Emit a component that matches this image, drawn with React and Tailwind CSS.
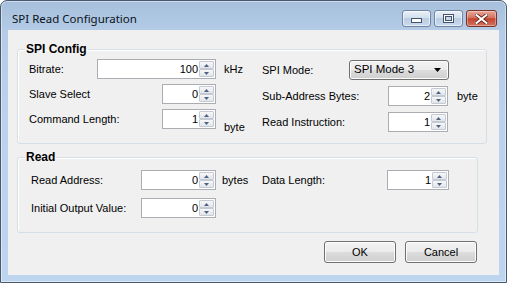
import React from 'react';

const btnFace =
  'bg-[linear-gradient(to_bottom,#f2f2f2_0%,#ebebeb_50%,#dddddd_50%,#cfcfcf_100%)] border border-[#707070] rounded-[3px] shadow-[inset_0_0_0_1px_#fcfcfc]';

function Spinner() {
  return (
    <div className="flex flex-col w-[15px] mr-[1px] py-[1px]">
      <div className="h-[8px] flex items-center justify-center border border-[#c3cad5] rounded-[1px] bg-[linear-gradient(to_bottom,#f7f7f7,#e3e5e9)]">
        <svg width="5" height="3" viewBox="0 0 5 3">
          <path d="M0 3 L2.5 0 L5 3 Z" fill="#4d6185" />
        </svg>
      </div>
      <div className="h-[8px] flex items-center justify-center border border-[#c3cad5] rounded-[1px] bg-[linear-gradient(to_bottom,#f7f7f7,#e3e5e9)]">
        <svg width="5" height="3" viewBox="0 0 5 3">
          <path d="M0 0 L5 0 L2.5 3 Z" fill="#4d6185" />
        </svg>
      </div>
    </div>
  );
}

function NumBox({ value, width }) {
  return (
    <div className={`flex h-[20px] border border-[#abadb3] bg-white shrink-0 ${width}`}>
      <div className="flex-1 text-right pr-[1px] leading-[18px] text-black">{value}</div>
      <Spinner />
    </div>
  );
}

function Label({ children, width }) {
  return <div className={`shrink-0 ${width}`}>{children}</div>;
}

function Group({ title, className, children }) {
  return (
    <fieldset className={`border border-[#d5dfe5] rounded-[3px] shadow-[inset_1px_1px_0_#ffffff] p-0 m-0 ${className}`}>
      <legend className="ml-[7px] px-[1px] text-[12px] leading-[14px] font-bold text-black">{title}</legend>
      {children}
    </fieldset>
  );
}

function CaptionButtons() {
  return (
    <div className="flex gap-[3px] pt-[9px] pr-[9px]">
      <div className="w-[29px] h-[17px] rounded-[3px] border border-[#6f84a2] bg-[linear-gradient(to_bottom,#e9f0f8_0%,#d3e0ee_45%,#bccde3_50%,#c9d9ec_100%)] shadow-[inset_0_0_0_1px_rgba(255,255,255,0.6)] flex items-end justify-center pb-[3px]">
        <svg width="11" height="5" viewBox="0 0 11 5">
          <rect x="0.5" y="0.5" width="10" height="4" fill="#ffffff" stroke="#43536b" />
        </svg>
      </div>
      <div className="w-[29px] h-[17px] rounded-[3px] border border-[#6f84a2] bg-[linear-gradient(to_bottom,#e9f0f8_0%,#d3e0ee_45%,#bccde3_50%,#c9d9ec_100%)] shadow-[inset_0_0_0_1px_rgba(255,255,255,0.6)] flex items-center justify-center">
        <svg width="11" height="9" viewBox="0 0 11 9">
          <rect x="0.5" y="0.5" width="10" height="8" fill="#ffffff" stroke="#43536b" />
          <rect x="2.5" y="2.5" width="6" height="4" fill="#c9d6e6" stroke="#43536b" />
        </svg>
      </div>
      <div className="w-[31px] h-[17px] rounded-[3px] border border-[#7b3228] bg-[linear-gradient(to_bottom,#e8a899_0%,#d5735f_45%,#c4432d_52%,#d27563_100%)] shadow-[inset_0_0_0_1px_rgba(255,255,255,0.35)] flex items-center justify-center">
        <svg width="13" height="10" viewBox="0 0 13 10">
          <path d="M1.5 1 L11.5 9 M11.5 1 L1.5 9" stroke="#5a1e16" strokeWidth="3.6" strokeLinecap="square" />
          <path d="M1.5 1 L11.5 9 M11.5 1 L1.5 9" stroke="#ffffff" strokeWidth="2" strokeLinecap="square" />
        </svg>
      </div>
    </div>
  );
}

export default function App() {
  return (
    <div className="w-[507px] h-[283px] bg-white font-['Liberation_Sans',Arial,sans-serif] text-[11px] text-black">
      <div className="w-[507px] h-[283px] flex flex-col border border-[#4a5a6e] rounded-t-[7px] bg-[linear-gradient(to_bottom,#a6bfdb_0%,#b4cce6_11%,#bad2eb_40%,#bdd5ee_100%)] shadow-[inset_0_0_0_1px_rgba(255,255,255,0.45)]">
        {/* Title bar */}
        <div className="h-[29px] flex justify-between shrink-0">
          <div className="pl-[11px] pt-[10px] font-['Noto_Sans',sans-serif] text-[11.5px] leading-[16px] text-[#0b1320]">
            SPI Read Configuration
          </div>
          <CaptionButtons />
        </div>

        {/* Client area */}
        <div className="mx-[7px] w-[491px] h-[245px] bg-[#f0f0f0] pl-[9px] pt-[12px] flex flex-col">
          <Group title="SPI Config" className="w-[470px] h-[102px]">
            <div className="flex pl-[11px]">
              <div className="w-[233px] flex flex-col gap-[5px] pt-[3px]">
                <div className="flex items-center h-[20px]">
                  <Label width="w-[68px]">Bitrate:</Label>
                  <NumBox value="100" width="w-[119px]" />
                  <div className="ml-[8px]">kHz</div>
                </div>
                <div className="flex items-center h-[20px]">
                  <Label width="w-[133px]">Slave Select</Label>
                  <NumBox value="0" width="w-[54px]" />
                </div>
                <div className="flex items-center h-[20px]">
                  <Label width="w-[133px]">Command Length:</Label>
                  <NumBox value="1" width="w-[54px]" />
                  <div className="ml-[8px] self-end -mb-[6px]">byte</div>
                </div>
              </div>
              <div className="flex flex-col gap-[6px] pt-[4px]">
                <div className="flex items-center h-[20px]">
                  <Label width="w-[87px]">SPI Mode:</Label>
                  <div className={`w-[100px] h-[20px] flex items-center justify-between pl-[4px] pr-[7px] ${btnFace}`}>
                    <span className="text-[11.5px]">SPI Mode 3</span>
                    <svg width="7" height="4" viewBox="0 0 7 4">
                      <path d="M0 0 L7 0 L3.5 4 Z" fill="#000000" />
                    </svg>
                  </div>
                </div>
                <div className="flex items-center h-[20px]">
                  <Label width="w-[126px]">Sub-Address Bytes:</Label>
                  <NumBox value="2" width="w-[60px]" />
                  <div className="ml-[9px]">byte</div>
                </div>
                <div className="flex items-center h-[20px]">
                  <Label width="w-[126px]">Read Instruction:</Label>
                  <NumBox value="1" width="w-[60px]" />
                </div>
              </div>
            </div>
          </Group>

          <Group title="Read" className="w-[461px] h-[83px] mt-[6px]">
            <div className="flex pl-[13px] pt-[6px]">
              <div className="w-[231px] flex flex-col gap-[8px]">
                <div className="flex items-center h-[20px]">
                  <Label width="w-[110px]">Read Address:</Label>
                  <NumBox value="0" width="w-[75px]" />
                  <div className="ml-[6px]">bytes</div>
                </div>
                <div className="flex items-center h-[20px]">
                  <Label width="w-[110px]">Initial Output Value:</Label>
                  <NumBox value="0" width="w-[75px]" />
                </div>
              </div>
              <div className="flex flex-col">
                <div className="flex items-center h-[20px]">
                  <Label width="w-[125px]">Data Length:</Label>
                  <NumBox value="1" width="w-[62px]" />
                </div>
              </div>
            </div>
          </Group>

          <div className="w-[460px] mt-[8px] flex justify-end gap-[9px]">
            <button className={`w-[72px] h-[22px] text-[11px] text-black ${btnFace}`}>OK</button>
            <button className={`w-[72px] h-[22px] text-[11px] text-black ${btnFace}`}>Cancel</button>
          </div>
        </div>
      </div>
    </div>
  );
}
